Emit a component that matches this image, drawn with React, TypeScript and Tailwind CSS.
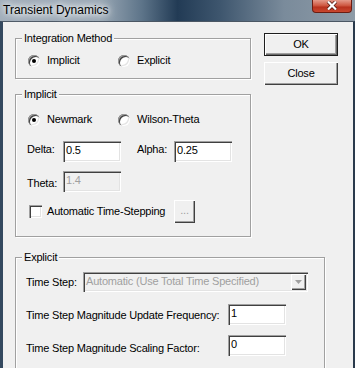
import type { ReactNode } from "react";

// classic Win32 dialog bits
const sunken =
  "shadow-[inset_1px_1px_0_#a0a0a0,inset_2px_2px_0_#404040,inset_-1px_-1px_0_#fff,inset_-2px_-2px_0_#e3e3e3]";
const raised =
  "shadow-[inset_1px_1px_0_#fff,inset_-1px_-1px_0_#404040,inset_-2px_-2px_0_#a0a0a0]";

function Group({ label, className, children }: { label: string; className: string; children: ReactNode }) {
  return (
    <div className={`border border-[#a0a0a0] shadow-[inset_1px_1px_0_#fff,1px_1px_0_#fff] ${className}`}>
      <div className="-mt-[7px] ml-[6px] w-fit bg-[#f0f0f0] px-[2px] leading-[13px]">{label}</div>
      {children}
    </div>
  );
}

function Radio({ label, checked, className }: { label: string; checked?: boolean; className?: string }) {
  return (
    <div className={`flex h-[13px] items-center gap-[7px] ${className ?? ""}`}>
      <span
        className={`flex h-[12px] w-[12px] items-center justify-center rounded-full bg-white shadow-[inset_1px_1px_0_#a0a0a0,inset_2px_2px_0_#404040,inset_-1px_-1px_0_#fff,inset_-2px_-2px_0_#e3e3e3]`}
      >
        {checked && <span className="h-[4px] w-[4px] rounded-full bg-black" />}
      </span>
      <span className="leading-[13px]">{label}</span>
    </div>
  );
}

function Field({ value, disabled, className }: { value: string; disabled?: boolean; className?: string }) {
  return (
    <div
      className={`h-[21px] w-[58px] pl-[3px] pt-[3px] leading-[13px] ${sunken} ${
        disabled ? "bg-[#f0f0f0] text-[#a0a0a0]" : "bg-white text-black"
      } ${className ?? ""}`}
    >
      {value}
    </div>
  );
}

export default function App() {
  return (
    <div className="h-[368px] w-[355px] overflow-hidden font-['Liberation_Sans',Arial,sans-serif] text-[11px] tracking-[-0.2px] text-black">
      {/* TITLE BAR */}
      <div className="flex h-[21px] items-start justify-between bg-[linear-gradient(90deg,#a2afbb_0%,#9aa8b5_28%,#5d7489_40%,#223b55_50%,#3e566e_62%,#7a8b9b_80%,#8e9ba7_100%)]">
        <span className="ml-[3px] mt-[3px] text-[12px] leading-[14px] tracking-normal [text-shadow:0_0_5px_#fff,0_0_9px_#fff,0_0_12px_#fff]">
          Transient Dynamics
        </span>
        <button className="mr-[3px] flex h-[13px] w-[40px] items-center justify-center rounded-b-[4px] border border-t-0 border-[#6b1d12] bg-[linear-gradient(180deg,#e49a8a_0%,#cf5a44_45%,#b8321e_60%,#c9472f_100%)]">
          <svg width="12" height="9" viewBox="0 0 12 9" className="-mt-[2px]">
            <path d="M2 0.5 L10 8.5 M10 0.5 L2 8.5" stroke="#4a1008" strokeWidth="3.6" />
            <path d="M2 0.5 L10 8.5 M10 0.5 L2 8.5" stroke="#fff" strokeWidth="2.2" />
          </svg>
        </button>
      </div>

      {/* CLIENT */}
      <div className="h-[347px] overflow-hidden border-l-[3px] border-r-[2px] border-t border-l-[#34495f] border-r-[#2a3a4c] border-t-[#4b5764] bg-[#f0f0f0] pl-[12px] pt-[11px]">
        <div className="flex">
          <div className="w-[236px] pt-[5px]">
            <Group label="Integration Method" className="h-[41px]">
              <div className="mt-[9px] flex pl-[12px]">
                <Radio label="Implicit" checked className="w-[90px]" />
                <Radio label="Explicit" />
              </div>
            </Group>

            <Group label="Implicit" className="mt-[15px] h-[143px]">
              <div className="mt-[12px] flex pl-[12px]">
                <Radio label="Newmark" checked className="w-[90px]" />
                <Radio label="Wilson-Theta" />
              </div>

              <div className="mt-[15px] flex items-start pl-[11px]">
                <span className="w-[36px] pt-[2px] leading-[13px]">Delta:</span>
                <Field value="0.5" />
                <span className="ml-[16px] w-[37px] pt-[2px] leading-[13px]">Alpha:</span>
                <Field value="0.25" />
              </div>

              <div className="mt-[9px] flex items-start pl-[11px]">
                <span className="w-[36px] pt-[6px] leading-[13px]">Theta:</span>
                <Field value="1.4" disabled />
              </div>

              <div className="mt-[8px] flex h-[23px] items-center pl-[13px]">
                <div className="flex w-[145px] items-center gap-[5px]">
                  <span className={`h-[13px] w-[13px] bg-white ${sunken}`} />
                  <span className="leading-[13px]">Automatic Time-Stepping</span>
                </div>
                <button className={`h-[23px] w-[21px] bg-[#f0f0f0] pb-[3px] leading-[13px] text-[#a0a0a0] ${raised}`}>
                  ...
                </button>
              </div>
            </Group>
          </div>

          <div className="ml-[13px] flex flex-col gap-[6px]">
            <button className="h-[23px] w-[74px] border border-[#1e1e1e] bg-[#f0f0f0] leading-[13px] shadow-[inset_1px_1px_0_#fff,inset_-1px_-1px_0_#696969,inset_-2px_-2px_0_#a0a0a0]">
              OK
            </button>
            <button className={`h-[23px] w-[74px] bg-[#f0f0f0] leading-[13px] ${raised}`}>Close</button>
          </div>
        </div>

        <Group label="Explicit" className="mt-[20px] h-[130px] w-[310px]">
          <div className="mt-[8px] flex items-start pl-[10px]">
            <span className="w-[57px] pt-[4px] leading-[13px]">Time Step:</span>
            <div className={`flex h-[20px] w-[225px] items-start bg-[#f0f0f0] ${sunken}`}>
              <span className="flex-1 truncate pl-[3px] pt-[3px] leading-[13px] text-[#a0a0a0]">
                Automatic (Use Total Time Specified)
              </span>
              <span
                className={`mr-[2px] mt-[2px] flex h-[16px] w-[15px] items-center justify-center bg-[#f0f0f0] ${raised}`}
              >
                <svg width="7" height="4" viewBox="0 0 7 4">
                  <path d="M0 0 H7 L3.5 4 Z" fill="#a0a0a0" />
                </svg>
              </span>
            </div>
          </div>

          <div className="mt-[12px] flex items-start pl-[10px]">
            <span className="w-[202px] pt-[5px] leading-[13px]">Time Step Magnitude Update Frequency:</span>
            <Field value="1" />
          </div>

          <div className="mt-[10px] flex items-start pl-[10px]">
            <span className="w-[202px] pt-[7px] leading-[13px]">Time Step Magnitude Scaling Factor:</span>
            <Field value="0" />
          </div>
        </Group>
      </div>
    </div>
  );
}
